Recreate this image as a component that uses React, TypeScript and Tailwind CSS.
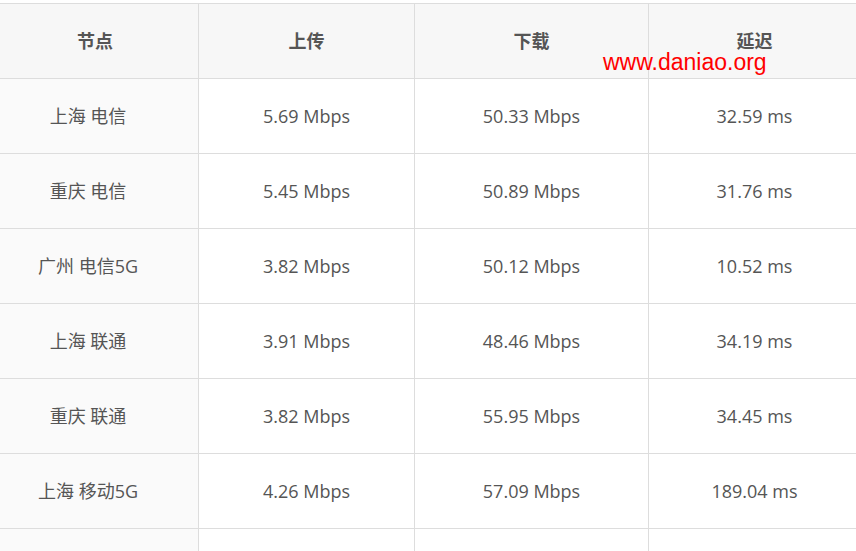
const rows = [
  ["上海 电信", "5.69 Mbps", "50.33 Mbps", "32.59 ms"],
  ["重庆 电信", "5.45 Mbps", "50.89 Mbps", "31.76 ms"],
  ["广州 电信5G", "3.82 Mbps", "50.12 Mbps", "10.52 ms"],
  ["上海 联通", "3.91 Mbps", "48.46 Mbps", "34.19 ms"],
  ["重庆 联通", "3.82 Mbps", "55.95 Mbps", "34.45 ms"],
  ["上海 移动5G", "4.26 Mbps", "57.09 Mbps", "189.04 ms"],
  ["", "", "", ""],
];

const headers = ["节点", "上传", "下载", "延迟"];

export default function App() {
  return (
    <div
      className="relative w-[856px] h-[551px] overflow-hidden bg-white text-[18px] text-[#555]"
      style={{ fontFamily: '"Open Sans", "Noto Sans CJK SC", sans-serif' }}
    >
      <div className="mt-[3px] w-[861px] border-t border-[#ddd] grid grid-cols-[199px_216px_234px_212px]">
        {headers.map((h, i) => (
          <div
            key={h}
            className={`h-[75px] flex items-center justify-center border-b border-r border-[#ddd] bg-[#f7f7f7] font-bold ${
              i === 0 ? "pr-[8px]" : ""
            }`}
          >
            {h}
          </div>
        ))}
        {rows.map((r, ri) =>
          r.map((c, i) => (
            <div
              key={ri + "-" + i}
              className={`h-[75px] flex items-center justify-center border-b border-r border-[#ddd] ${
                i === 0 ? "bg-[#fafafa] pr-[22px]" : "bg-white"
              }`}
            >
              {c}
            </div>
          ))
        )}
      </div>

      {/* watermark */}
      <div
        className="absolute left-[603px] top-[51px] text-[23px] leading-none text-[#ff0000]"
        style={{ fontFamily: '"Liberation Sans", Arial, sans-serif' }}
      >
        www.daniao.org
      </div>
    </div>
  );
}
